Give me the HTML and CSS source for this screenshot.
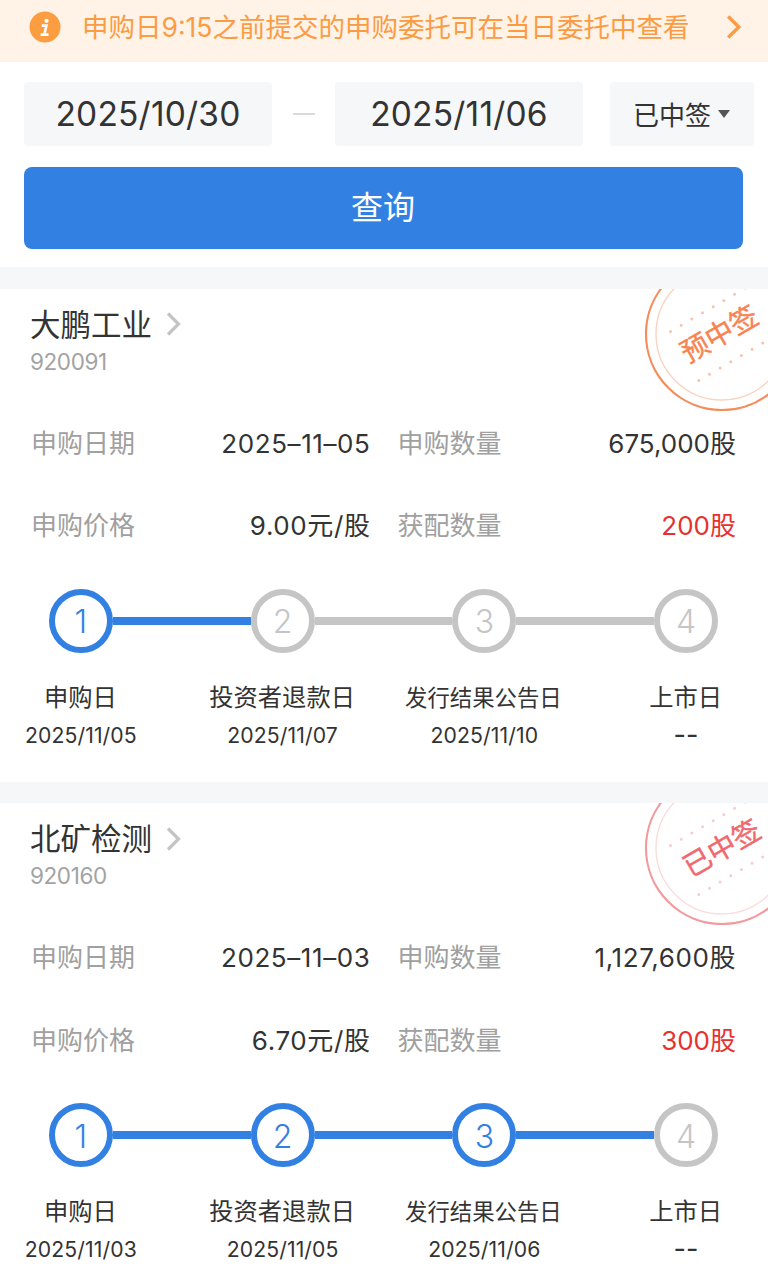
FILE: index.html
```html
<!DOCTYPE html>
<html lang="zh-CN">
<head>
    <meta charset="UTF-8">
    <meta name="viewport" content="width=device-width, initial-scale=1.0">
    <title>中签查询</title>
    <link rel="stylesheet" href="styles.css">
</head>
<body>
    <div class="notice">
        <svg class="notice-icon" viewBox="0 0 32 32">
            <circle cx="16" cy="16" r="15.5" fill="#fd9d42"/>
            <circle cx="17.6" cy="9.8" r="2.1" fill="#fff"/>
            <path d="M12.8 14.6h4.6l-1.9 8.4M11.6 23.6h8" fill="none" stroke="#fff" stroke-width="2.6"/>
        </svg>
        <span class="notice-text">申购日9:15之前提交的申购委托可在当日委托中查看</span>
        <svg class="notice-arrow" viewBox="0 0 16 24">
            <path d="M2.2 1.5L12.8 12 2.2 22.5" fill="none" stroke="#fb9b43" stroke-width="3.4"/>
        </svg>
    </div>

    <div class="filter">
        <div class="filter-row">
            <div class="date-box">2025/10/30</div>
            <span class="dash"></span>
            <div class="date-box">2025/11/06</div>
            <div class="select-box">已中签<span class="caret"></span></div>
        </div>
        <button class="query">查询</button>
    </div>

    <div class="card">
        <svg class="stamp" viewBox="0 0 124 122">
            <circle cx="78" cy="45" r="76" fill="none" stroke="#f68c5c" stroke-width="2.2"/>
            <circle cx="78" cy="45" r="66" fill="none" stroke="#fbd3c1" stroke-width="1.4"/>
            <path d="M26.5 42.5L121 -12.5" class="dots" stroke="#f9c3ab"/>
            <path d="M54.8 91.5L140 41.5" class="dots" stroke="#f9c3ab"/>
            <text x="75.5" y="55" transform="rotate(-30 75.5 45)" class="stamp-text" fill="#f88350" stroke="#f88350">预中签</text>
        </svg>
        <div class="name">大鹏工业
            <svg class="name-arrow" viewBox="0 0 16 24"><path d="M2 1.5L12.5 12 2 22.5" fill="none" stroke="#c4c4c4" stroke-width="3.2"/></svg>
        </div>
        <div class="code">920091</div>
        <div class="info">
            <span class="label">申购日期</span>
            <span class="value wide">2025–11–05</span>
            <span class="label">申购数量</span>
            <span class="value">675,000股</span>
            <span class="label">申购价格</span>
            <span class="value wide">9.00元/股</span>
            <span class="label">获配数量</span>
            <span class="value red">200股</span>
        </div>
        <div class="steps">
            <div class="step done">
                <div class="track"><i class="line none"></i><b class="circle">1</b><i class="line"></i></div>
                <div class="step-name">申购日</div>
                <div class="step-date">2025/11/05</div>
            </div>
            <div class="step">
                <div class="track"><i class="line blue"></i><b class="circle">2</b><i class="line"></i></div>
                <div class="step-name">投资者退款日</div>
                <div class="step-date">2025/11/07</div>
            </div>
            <div class="step">
                <div class="track"><i class="line"></i><b class="circle">3</b><i class="line"></i></div>
                <div class="step-name small">发行结果公告日</div>
                <div class="step-date">2025/11/10</div>
            </div>
            <div class="step">
                <div class="track"><i class="line"></i><b class="circle">4</b><i class="line none"></i></div>
                <div class="step-name">上市日</div>
                <div class="step-date empty">--</div>
            </div>
        </div>
    </div>

    <div class="card">
        <svg class="stamp" viewBox="0 0 124 122">
            <circle cx="78" cy="45" r="76" fill="none" stroke="#f29a9e" stroke-width="2.2"/>
            <circle cx="78" cy="45" r="66" fill="none" stroke="#fbdcde" stroke-width="1.4"/>
            <path d="M26.5 42.5L121 -12.5" class="dots" stroke="#f9cbce"/>
            <path d="M54.8 91.5L140 41.5" class="dots" stroke="#f9cbce"/>
            <text x="78" y="55" transform="rotate(-30 78 45)" class="stamp-text" fill="#f0686e" stroke="#f0686e">已中签</text>
        </svg>
        <div class="name">北矿检测
            <svg class="name-arrow" viewBox="0 0 16 24"><path d="M2 1.5L12.5 12 2 22.5" fill="none" stroke="#c4c4c4" stroke-width="3.2"/></svg>
        </div>
        <div class="code">920160</div>
        <div class="info">
            <span class="label">申购日期</span>
            <span class="value wide">2025–11–03</span>
            <span class="label">申购数量</span>
            <span class="value wide">1,127,600股</span>
            <span class="label">申购价格</span>
            <span class="value wide">6.70元/股</span>
            <span class="label">获配数量</span>
            <span class="value red">300股</span>
        </div>
        <div class="steps">
            <div class="step done">
                <div class="track"><i class="line none"></i><b class="circle">1</b><i class="line"></i></div>
                <div class="step-name">申购日</div>
                <div class="step-date">2025/11/03</div>
            </div>
            <div class="step done">
                <div class="track"><i class="line"></i><b class="circle">2</b><i class="line"></i></div>
                <div class="step-name">投资者退款日</div>
                <div class="step-date">2025/11/05</div>
            </div>
            <div class="step done">
                <div class="track"><i class="line"></i><b class="circle">3</b><i class="line"></i></div>
                <div class="step-name small">发行结果公告日</div>
                <div class="step-date">2025/11/06</div>
            </div>
            <div class="step">
                <div class="track"><i class="line blue"></i><b class="circle">4</b><i class="line none"></i></div>
                <div class="step-name">上市日</div>
                <div class="step-date empty">--</div>
            </div>
        </div>
    </div>
</body>
</html>
```
FILE: styles.css
```css
* {
    box-sizing: border-box;
}
body {
    margin: 0;
    background: #f6f7f9;
    color: #333;
    font-family: Inter, "Noto Sans CJK SC", sans-serif;
    font-weight: 380;
    overflow-x: hidden;
}
.notice {
    display: flex;
    align-items: center;
    height: 62px;
    padding: 0 26px 9px 29px;
    background: #fff3e7;
    color: #fb9b43;
}
.notice-icon {
    width: 32px;
    height: 32px;
    margin-right: 21px;
}
.notice-text {
    padding-bottom: 3px;
    font-size: 26.5px;
    white-space: nowrap;
}
.notice-arrow {
    width: 16px;
    height: 24px;
    margin-left: auto;
}
.filter {
    height: 205px;
    padding: 20px 14px 0 24px;
    background: #fff;
}
.filter-row {
    display: flex;
    align-items: center;
}
.date-box,
.select-box {
    display: flex;
    align-items: center;
    justify-content: center;
    height: 64px;
    border-radius: 4px;
    background: #f6f7f9;
}
.date-box {
    width: 248px;
    font-size: 33.5px;
    letter-spacing: 0.2px;
}
.dash {
    width: 22px;
    height: 2px;
    margin: 0 20.5px;
    background: #d9dadc;
}
.select-box {
    width: 144px;
    margin-left: auto;
    padding: 0 1px 2px 0;
    font-size: 26px;
}
.caret {
    margin: 2px 0 0 7px;
    border: 6.5px solid transparent;
    border-top: 8px solid #555;
    border-bottom: 0;
}
.query {
    display: block;
    width: 719px;
    height: 82px;
    margin-top: 21px;
    padding: 0 1px 6px 0;
    border: 0;
    border-radius: 8px;
    background: #3281e2;
    color: #fff;
    font-family: inherit;
    font-size: 32px;
    font-weight: inherit;
}
.card {
    position: relative;
    height: 493px;
    margin-top: 21.5px;
    padding: 12px 32px 0 30px;
    background: #fff;
    overflow: hidden;
}
.stamp {
    position: absolute;
    top: 0;
    right: 0;
    width: 124px;
    height: 122px;
}
.stamp-text {
    font-size: 28px;
    stroke-width: 0.4;
    text-anchor: middle;
}
.dots {
    fill: none;
    stroke-width: 3;
    stroke-linecap: round;
    stroke-dasharray: 0 12.35;
}
.name {
    display: flex;
    align-items: center;
    height: 44px;
    font-size: 30.5px;
}
.name-arrow {
    width: 16px;
    height: 24px;
    margin: 3px 0 0 14px;
}
.code {
    height: 32px;
    color: #a3a3a3;
    font-size: 22.5px;
    letter-spacing: -0.4px;
    line-height: 34px;
}
.info {
    display: grid;
    grid-template-columns: 120px 219.5px 120px 1fr;
    margin-top: 26px;
    font-size: 26px;
    line-height: 82.5px;
    padding-left: 1px;
}
.label {
    color: #a0a0a0;
}
.value {
    text-align: right;
}
.value.wide {
    letter-spacing: 0.6px;
}
.info .label:nth-child(4n+3) {
    padding-left: 27px;
    white-space: nowrap;
}
.red {
    color: #e93030;
}
.steps {
    display: grid;
    grid-template-columns: repeat(4, 1fr);
    margin: 21.4px -51px 0 -50px;
    text-align: center;
}
.track {
    display: flex;
    align-items: center;
    height: 64px;
}
.line {
    flex: 1;
    height: 8px;
    background: #c5c5c5;
}
.circle {
    display: flex;
    align-items: center;
    justify-content: center;
    width: 64px;
    height: 64px;
    padding-top: 2px;
    border: 6px solid #c5c5c5;
    border-radius: 50%;
    color: #c5c5c5;
    font-size: 32px;
    font-weight: 300;
}
.done .circle {
    border-color: #3281e2;
    color: #3281e2;
}
.done .line,
.line.blue {
    background: #3281e2;
}
.track .line.none {
    background: none;
}
.step-name {
    margin: 25px 1px 0 0;
    font-size: 24.3px;
    line-height: 38px;
}
.step-name.small {
    margin-right: 2px;
    padding-top: 1px;
    font-size: 22.4px;
    line-height: 37px;
}
.step-date {
    font-size: 21.2px;
    letter-spacing: 0.1px;
    line-height: 38px;
}
.step-date.empty {
    font-size: 27px;
}
```
